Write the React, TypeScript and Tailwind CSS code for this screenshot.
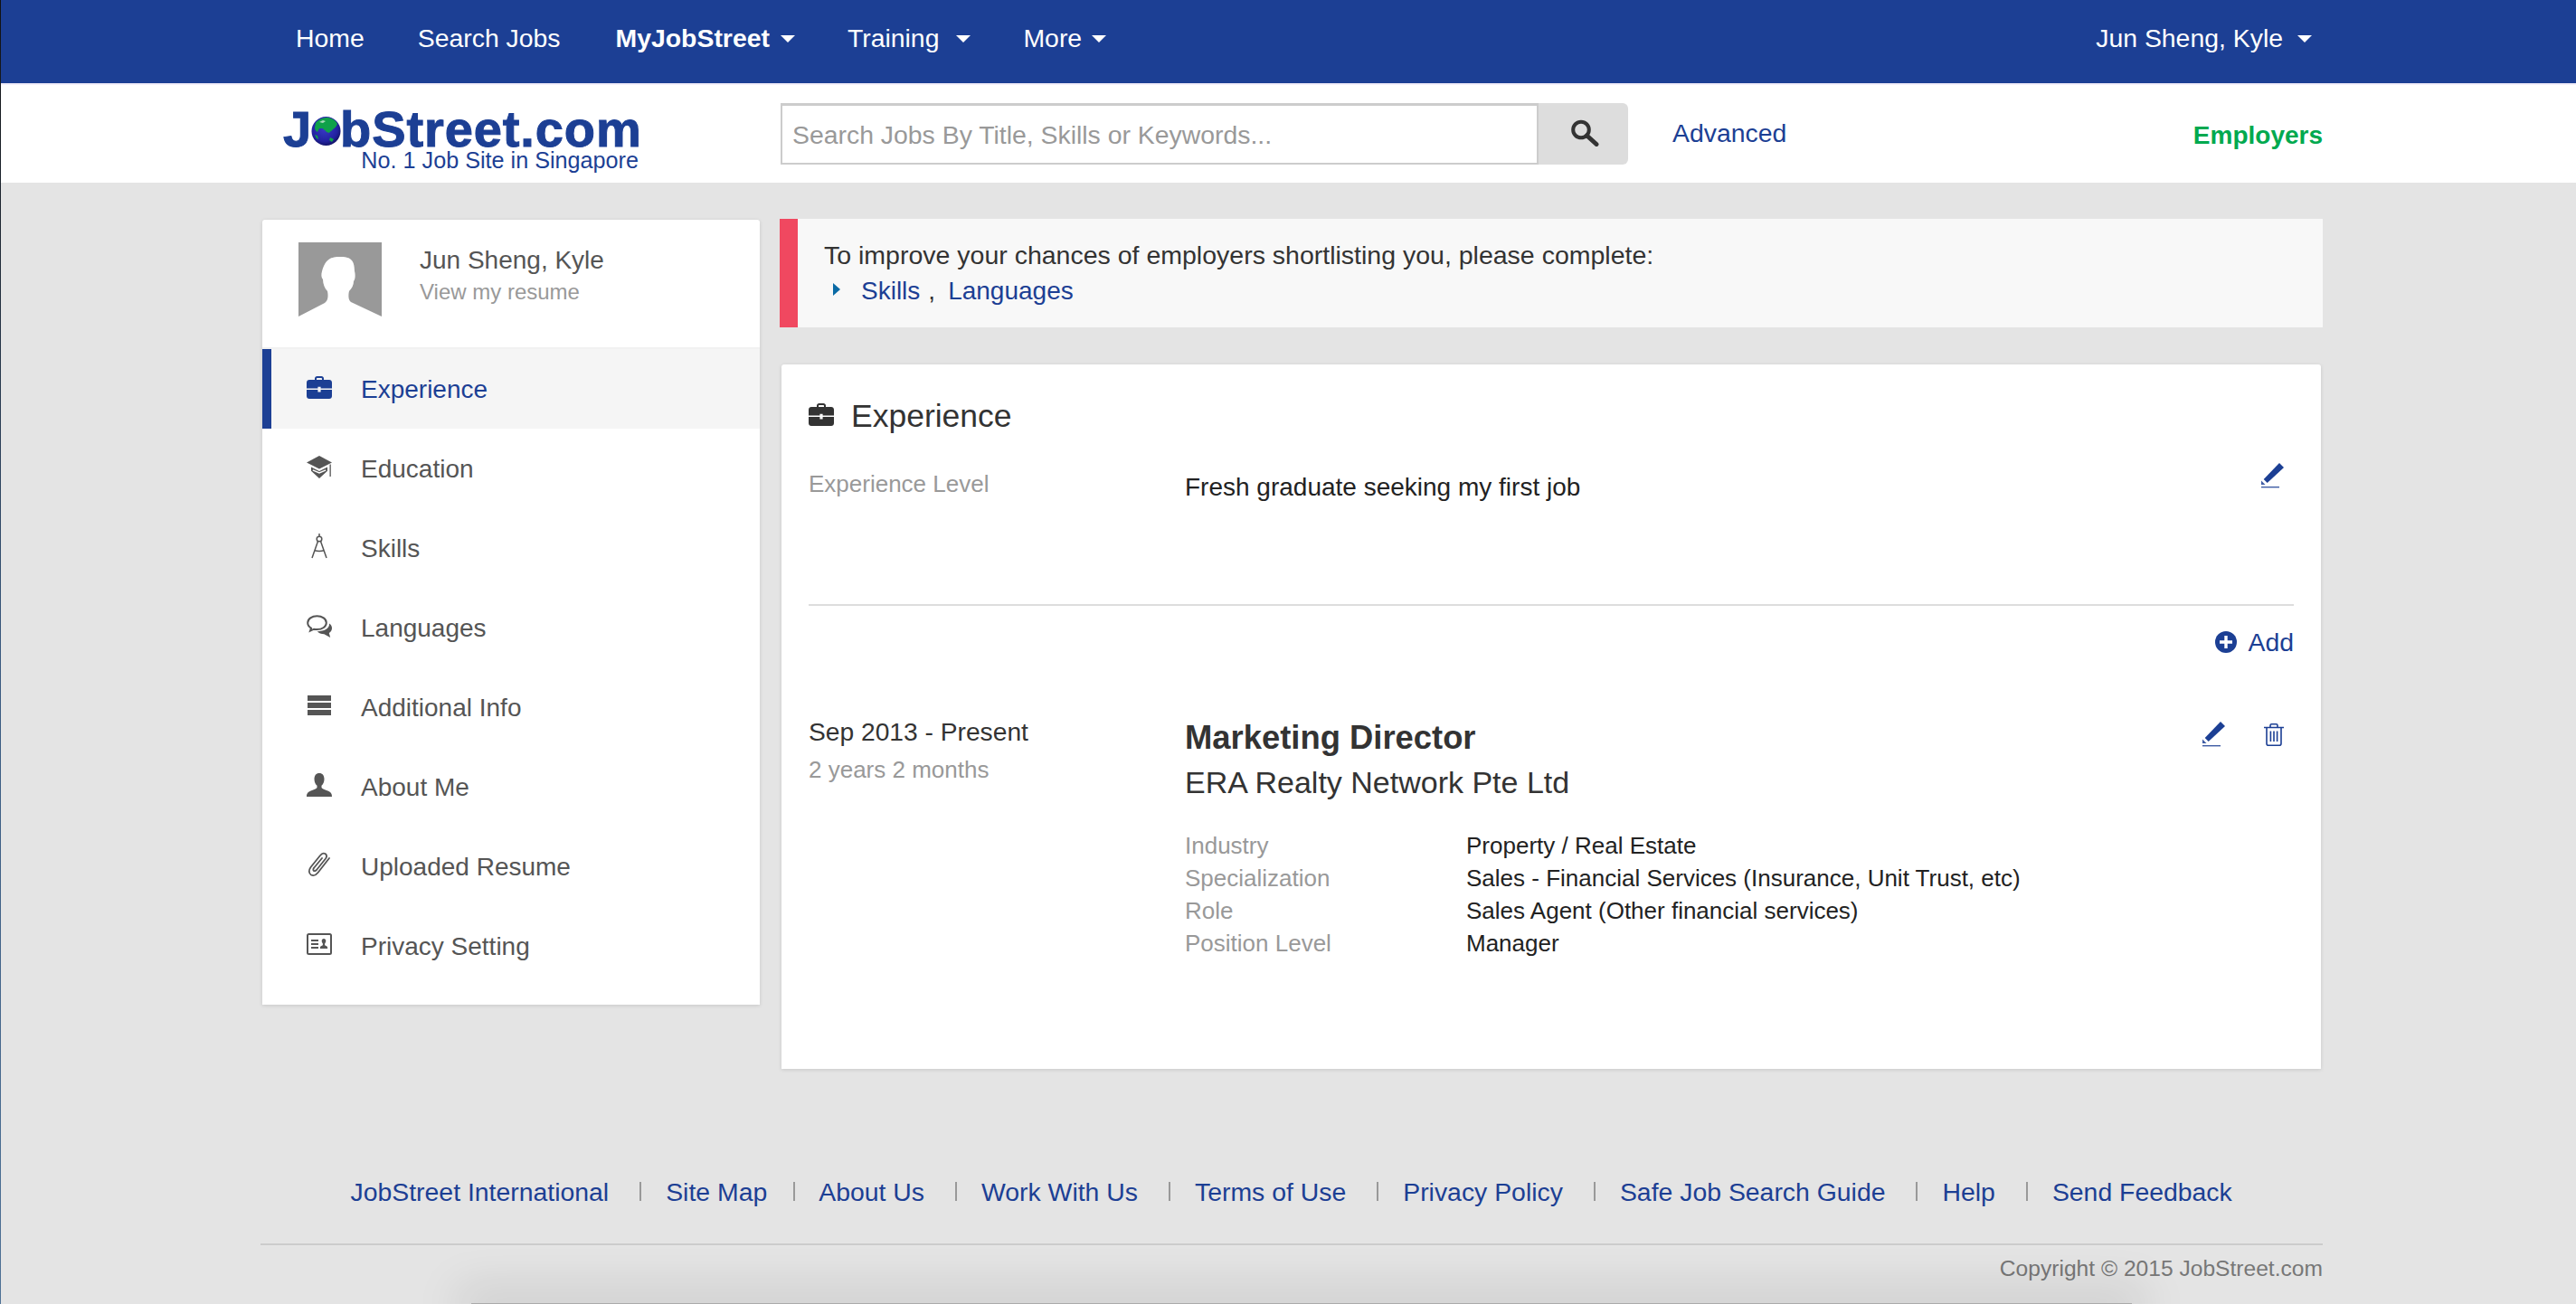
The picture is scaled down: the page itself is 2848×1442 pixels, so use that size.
import React from "react";

const BLUE = "#1c3f94";

function Caret({ className = "" }: { className?: string }) {
  return (
    <svg width="16" height="8" viewBox="0 0 16 8" className={className}>
      <path d="M0 0h16L8 8z" fill="#fff" />
    </svg>
  );
}

function Briefcase({ color }: { color: string }) {
  return (
    <svg width="28" height="25" viewBox="0 0 28 25">
      <path
        fill={color}
        fillRule="evenodd"
        d="M9 4V2.6C9 1.2 10.2 0 11.6 0h4.8C17.8 0 19 1.2 19 2.6V4h6c1.7 0 3 1.3 3 3v6.5H15.6v-1.7h-3.2v1.7H0V7c0-1.7 1.300-3 3-3h6zm2 0h6V2.800c0-.4-.3-.8-.8-.8h-4.400c-.5 0-.8.4-.8.8V4z"
      />
      <path fill={color} d="M0 15h12.400v2.500h3.200V15H28v7c0 1.700-1.300 3-3 3H3c-1.700 0-3-1.300-3-3v-7z" />
    </svg>
  );
}

function Cap() {
  return (
    <svg width="28" height="25" viewBox="0 0 28 25" fill="#555">
      <path d="M14 0 28 7.500 14 14.500 0 7.500z" />
      <path d="M5 12.500 14 17l9-4.500v4.200L14 25 5 16.700z" fill="#555" />
      <path d="M6.800 15.800 14 19l7.200-3.200" stroke="#fff" strokeWidth="1.400" fill="none" />
      <path d="M25.500 9.500h1.300V23h-1.300z" />
    </svg>
  );
}

function Compass() {
  return (
    <svg width="18" height="28" viewBox="0 0 18 28" fill="none" stroke="#555" strokeWidth="1.500">
      <path d="M9 0v3" />
      <circle cx="9" cy="6" r="2.800" />
      <path d="M7.500 8.500 1 27M10.500 8.500 17 27M3.500 18.500c3.500 1.200 7.500 1.200 11 0" />
    </svg>
  );
}

function Chat() {
  return (
    <svg width="28" height="25" viewBox="0 0 28 25">
      <path
        fill="none"
        stroke="#555"
        strokeWidth="2"
        d="M11.500 1.200C5.700 1.200 1.200 4.500 1.200 8.700c0 2.400 1.500 4.500 3.800 5.900l-1 3 4-1.900c1.100.3 2.300.4 3.500.4 5.800 0 10.300-3.300 10.300-7.400S17.300 1.200 11.500 1.200z"
      />
      <path fill="#555" d="M25 9.500c2 1.400 3 3.200 3 5.200 0 2.200-1.200 4.100-3.200 5.400l1.400 4.900-6.800-3.800c-3.200-.1-6-1.200-7.700-3 6.500.2 14-3 13.300-8.700z" />
    </svg>
  );
}

function Stack() {
  return (
    <svg width="26" height="22" viewBox="0 0 26 22" fill="#555">
      <path d="M0 0h26v6H0zM0 8h26v6H0zM0 16h26v6H0z" />
    </svg>
  );
}

function User() {
  return (
    <svg width="28" height="26" viewBox="0 0 28 26" fill="#555">
      <path d="M14 0c3.500 0 5.500 2.700 5.500 6.500 0 3-1.200 5.800-3 7.200v2c0 1.500 4 2.500 7.500 4 2.500 1.100 4 2.500 4 6.300H0c0-3.800 1.500-5.200 4-6.300 3.500-1.500 7.500-2.500 7.500-4v-2c-1.800-1.400-3-4.200-3-7.200C8.500 2.700 10.500 0 14 0z" />
    </svg>
  );
}

function Clip() {
  return (
    <svg width="26" height="28" viewBox="0 0 26 28" fill="none" stroke="#555" strokeWidth="1.800" strokeLinecap="round">
      <path d="M24 7 11.500 23C9.500 25.500 7 27 4 25.500 1.500 24 1 20.500 3.500 17L14 4c1.500-2 3.500-3 5.500-2 2 1.500 2 3.500.5 5.500L10 20c-1 1-2.500 1.500-3.200.8-.8-.8-.5-2.300.5-3.300L16 7" />
    </svg>
  );
}

function IdCard() {
  return (
    <svg width="28" height="24" viewBox="0 0 28 24">
      <rect x="1" y="1" width="26" height="22" rx="1.500" fill="none" stroke="#555" strokeWidth="2" />
      <path fill="#555" d="M5 7h8v2H5zM5 11h8v2H5zM5 15h8v2H5z" />
      <path fill="#555" d="M19 6c1.400 0 2.300 1.100 2.300 2.600 0 1.200-.5 2.200-1.200 2.800v1.500c0 .6 3 .9 3 3.100v1h-8.200v-1c0-2.200 3-2.500 3-3.100v-1.500c-.7-.6-1.200-1.600-1.200-2.800C16.700 7.100 17.600 6 19 6z" />
    </svg>
  );
}

function Pencil() {
  return (
    <svg width="25" height="28" viewBox="0 0 25 28" className="block">
      <path fill={BLUE} d="M20 0l5 5L6.700 22 2.700 18z" />
      <path fill={BLUE} d="M0 19.500 4.500 24H0z" opacity="0.85" />
      <path fill={BLUE} d="M0 26h20v1.400H0z" opacity="0.85" />
    </svg>
  );
}

function Trash() {
  return (
    <svg width="22" height="25" viewBox="0 0 22 25" fill="none" stroke={BLUE} strokeWidth="1.600" className="block">
      <path d="M0 4.500h22M7 4.500V2.300C7 1.400 7.700.8 8.500.8h5c.8 0 1.500.6 1.500 1.500v2.200" />
      <path d="M3 4.500v17.700c0 1.100.8 2 1.900 2h12.200c1.100 0 1.900-.9 1.900-2V4.500" />
      <path d="M7.400 8.500v11.500M11 8.500v11.500M14.600 8.500v11.500" />
    </svg>
  );
}

function PlusCircle() {
  return (
    <svg width="24" height="24" viewBox="0 0 24 24" className="block">
      <circle cx="12" cy="12" r="12" fill={BLUE} />
      <path d="M10.300 5h3.400v5.300H19v3.400h-5.300V19h-3.400v-5.300H5v-3.400h5.300z" fill="#fff" />
    </svg>
  );
}

function SearchGlyph() {
  return (
    <svg width="32" height="30" viewBox="0 0 32 30" fill="none" stroke="#333" className="block">
      <circle cx="12" cy="11.500" r="8.800" strokeWidth="4" />
      <path d="M18.500 18 29 27.500" strokeWidth="5" strokeLinecap="round" />
    </svg>
  );
}

function Globe() {
  return (
    <svg width="33" height="32" viewBox="0 0 33 32" className="block mx-[-1px] mt-[3px] shrink-0">
      <defs>
        <radialGradient id="g" cx="45%" cy="40%" r="60%">
          <stop offset="0%" stopColor="#3a3ac8" />
          <stop offset="75%" stopColor="#2222a0" />
          <stop offset="100%" stopColor="#14146a" />
        </radialGradient>
      </defs>
      <circle cx="16.500" cy="16" r="16" fill="url(#g)" />
      <path
        fill="#0fa14a"
        d="M5 7c3-4 8-6 13-6 5 .5 9 3 11 7-1 3-3 5-5 6-1 2-3 2-4 4l-3-1c-1-2-3-2-4-4L9 13l-2 4c-2-1-3-3-3-5l1-5z"
      />
      <path fill="#0fa14a" d="M21 23l4 2-2 3-3-2zM4 20l3 1 1 4-2-1z" />
      <path fill="#cfe8d6" d="M9 6l4-2 3 1-3 2z" opacity="0.8" />
    </svg>
  );
}

function Avatar() {
  return (
    <svg width="92" height="82" viewBox="0 0 92 82" className="block shrink-0">
      <path d="M0 0h92v82L58 66c-3-2-3-8-2-12 3-3 5-7 5-11 2-2 2-8 1-11C62 18 56 16 46 16S30 18 26 32c-1 3-1 7 1 9 0 5 2 10 5 13 1 5 1 10-3 13L0 82z" fill="#999" />
    </svg>
  );
}

const menu: { label: string; icon: React.ReactNode; active?: boolean }[] = [
  { label: "Experience", icon: <Briefcase color={BLUE} />, active: true },
  { label: "Education", icon: <Cap /> },
  { label: "Skills", icon: <Compass /> },
  { label: "Languages", icon: <Chat /> },
  { label: "Additional Info", icon: <Stack /> },
  { label: "About Me", icon: <User /> },
  { label: "Uploaded Resume", icon: <Clip /> },
  { label: "Privacy Setting", icon: <IdCard /> },
];

const details = [
  ["Industry", "Property / Real Estate"],
  ["Specialization", "Sales - Financial Services (Insurance, Unit Trust, etc)"],
  ["Role", "Sales Agent (Other financial services)"],
  ["Position Level", "Manager"],
];

const footerLinks = [
  "JobStreet International",
  "Site Map",
  "About Us",
  "Work With Us",
  "Terms of Use",
  "Privacy Policy",
  "Safe Job Search Guide",
  "Help",
  "Send Feedback",
];

export default function App() {
  return (
    <div className="relative h-[1442px] w-full overflow-hidden bg-[#e4e4e4] font-['Liberation_Sans',Arial,sans-serif] text-[28px] leading-[40px] text-[#333]">
      <div className="absolute left-0 top-0 z-10 h-[1442px] w-px bg-gradient-to-b from-[#111] via-[#3a5a80] to-[#4f7296]" />

      {/* top nav */}
      <nav className="flex h-[92px] items-center bg-[#1c3f94] pb-[8px] pl-[327px] pr-[292px] text-[28.400px] text-white">
        <a className="mr-[59px]">Home</a>
        <a className="mr-[61px]">Search Jobs</a>
        <a className="flex items-center font-bold">
          MyJobStreet
          <Caret className="ml-[12px] mt-[1px]" />
        </a>
        <a className="ml-[58px] flex items-center">
          Training
          <Caret className="ml-[19px] mt-[1px]" />
        </a>
        <a className="ml-[58px] flex items-center">
          More
          <Caret className="ml-[11px] mt-[1px]" />
        </a>
        <a className="ml-auto flex items-center">
          Jun Sheng, Kyle
          <Caret className="ml-[16px] mt-[1px]" />
        </a>
      </nav>
      <div className="h-[2px] bg-[#f2eefa]" />

      {/* header */}
      <header className="flex h-[108px] items-center bg-white pl-[313px] pr-[280px]">
        <div className="mt-[22px] w-[550px] shrink-0">
          <div className="mt-[-4px] flex h-[42px] items-center text-[56px] font-bold leading-[42px] tracking-[0.9px] text-[#1c3f94] [-webkit-text-stroke:1px_#1c3f94]">
            <span>J</span>
            <Globe />
            <span>bStreet.com</span>
          </div>
          <div className="mt-[-2px] pr-[157px] text-right text-[25.200px] leading-[30px] text-[#1c3f94]">No. 1 Job Site in Singapore</div>
        </div>
        <div className="flex h-[68px] w-[937px] shrink-0">
          <div className="flex flex-1 items-center border-2 border-t-[3px] border-[#ccc] bg-white pl-[11px] text-[28.400px] text-[#999]">
            Search Jobs By Title, Skills or Keywords...
          </div>
          <div className="flex w-[99px] items-center justify-center rounded-r-[6px] bg-[#ddd] pb-[2px] pl-[3px]">
            <SearchGlyph />
          </div>
        </div>
        <a className="ml-[49px] mt-[-3px] text-[28.400px] text-[#1c3f94]">Advanced</a>
        <a className="ml-auto mt-[3px] font-bold text-[#00a94f]">Employers</a>
      </header>

      {/* main */}
      <main className="flex items-start pl-[290px] pr-[280px] pt-[40px]">
        <aside className="mt-px w-[550px] shrink-0 rounded-t-[3px] bg-white pb-[21px] shadow-[0_1px_4px_rgba(0,0,0,0.13)]">
          <div className="flex h-[143px] border-b-2 border-[#f1f1f1] pl-[40px] pt-[25px]">
            <Avatar />
            <div className="ml-[42px]">
              <div className="text-[#555]">Jun Sheng, Kyle</div>
              <div className="mt-[-3px] text-[24px] leading-[36px] text-[#999]">View my resume</div>
            </div>
          </div>
          {menu.map((m) => (
            <div
              key={m.label}
              className={
                m.active
                  ? "flex h-[88px] items-center border-l-[10px] border-[#1c3f94] bg-[#f5f5f5] pl-[39px] text-[#1c3f94]"
                  : "flex h-[88px] items-center border-l-[10px] border-transparent pl-[39px] text-[#555]"
              }
            >
              <span className="mb-[4px] flex w-[60px] shrink-0 justify-start">
                <span className="flex w-[28px] justify-center">{m.icon}</span>
              </span>
              <span className="pt-[2px]">{m.label}</span>
            </div>
          ))}
        </aside>

        <section className="ml-[22px] flex-1">
          <div className="flex h-[120px] bg-[#f8f8f8]">
            <div className="w-[20px] bg-[#f04860]" />
            <div className="pl-[29px] pt-[20px] text-[#333]">
              <div className="text-[28.500px]">To improve your chances of employers shortlisting you, please complete:</div>
              <div className="flex items-center">
                <svg width="8" height="14" viewBox="0 0 8 14" className="mb-[4px] ml-[10px] mr-[23px]">
                  <path d="M0 0l8 7-8 7z" fill="#0a6aa5" />
                </svg>
                <a className="text-[#1c3f94]">Skills</a>
                <span className="ml-[9px] mr-[13px]">,</span>
                <a className="ml-[1px] text-[#1c3f94]">Languages</a>
              </div>
            </div>
          </div>

          <div className="mx-[2px] mt-[41px] h-[779px] rounded-t-[3px] bg-white px-[30px] pt-[37px] shadow-[0_1px_4px_rgba(0,0,0,0.13)]">
            <div className="flex items-center">
              <span className="mb-[4px]">
                <Briefcase color="#333" />
              </span>
              <h2 className="ml-[19px] text-[35.500px] leading-[40px] text-[#333]">Experience</h2>
            </div>

            <div className="relative mt-[34px] flex h-[156px] border-b-2 border-[#ddd]">
              <div className="mt-px w-[416px] shrink-0 text-[26px] leading-[40px] text-[#999]">Experience Level</div>
              <div className="mt-[5px] text-[#222]">Fresh graduate seeking my first job</div>
              <div className="absolute right-[11px] top-[-2px]">
                <Pencil />
              </div>
            </div>

            <div className="mt-[20px] flex h-[40px] items-center justify-end">
              <PlusCircle />
              <a className="ml-[12px] text-[28.400px] text-[#1c3f94]">Add</a>
            </div>

            <div className="relative mt-[59px] flex">
              <div className="w-[416px] shrink-0">
                <div className="text-[28.200px] text-[#333]">Sep 2013 - Present</div>
                <div className="mt-[2px] text-[26px] leading-[40px] text-[#999]">2 years 2 months</div>
              </div>
              <div>
                <div className="mt-[5px] text-[36.400px] font-bold leading-[44px] text-[#333]">Marketing Director</div>
                <div className="mt-[5px] text-[34px] leading-[44px] text-[#333]">ERA Realty Network Pte Ltd</div>
                <div className="mt-[30px] text-[26px] leading-[36px]">
                  {details.map(([k, v]) => (
                    <div key={k} className="flex">
                      <div className="w-[311px] shrink-0 text-[#999]">{k}</div>
                      <div className="text-[#222]">{v}</div>
                    </div>
                  ))}
                </div>
              </div>
              <div className="absolute right-[76px] top-[9px]">
                <Pencil />
              </div>
              <div className="absolute right-[11px] top-[11px]">
                <Trash />
              </div>
            </div>
          </div>
        </section>
      </main>

      {/* footer */}
      <footer className="mt-[116px] pl-[288px] pr-[280px]">
        <div className="flex h-[40px] items-center pl-[99.500px] text-[28.400px] text-[#1c3f94]">
          {footerLinks.map((l, i) => (
            <React.Fragment key={l}>
              {i > 0 && (
                <span
                  className={
                    i === 2
                      ? "ml-[29px] mr-[26px] mt-[-2px] h-[21px] w-[2px] shrink-0 bg-[#999]"
                      : "ml-[34px] mr-[27px] mt-[-2px] h-[21px] w-[2px] shrink-0 bg-[#999]"
                  }
                />
              )}
              <a>{l}</a>
            </React.Fragment>
          ))}
        </div>
        <div className="mt-[37px] border-t-2 border-[#ccc] pt-[6px] text-right text-[24.600px] leading-[40px] text-[#777]">
          Copyright © 2015 JobStreet.com
        </div>
      </footer>

      {/* window shadow over the page bottom */}
      <div className="absolute bottom-0 left-[521px] h-px w-[1836px] bg-[#aaa] shadow-[0_0_50px_15px_rgba(0,0,0,0.13)]" />
    </div>
  );
}
